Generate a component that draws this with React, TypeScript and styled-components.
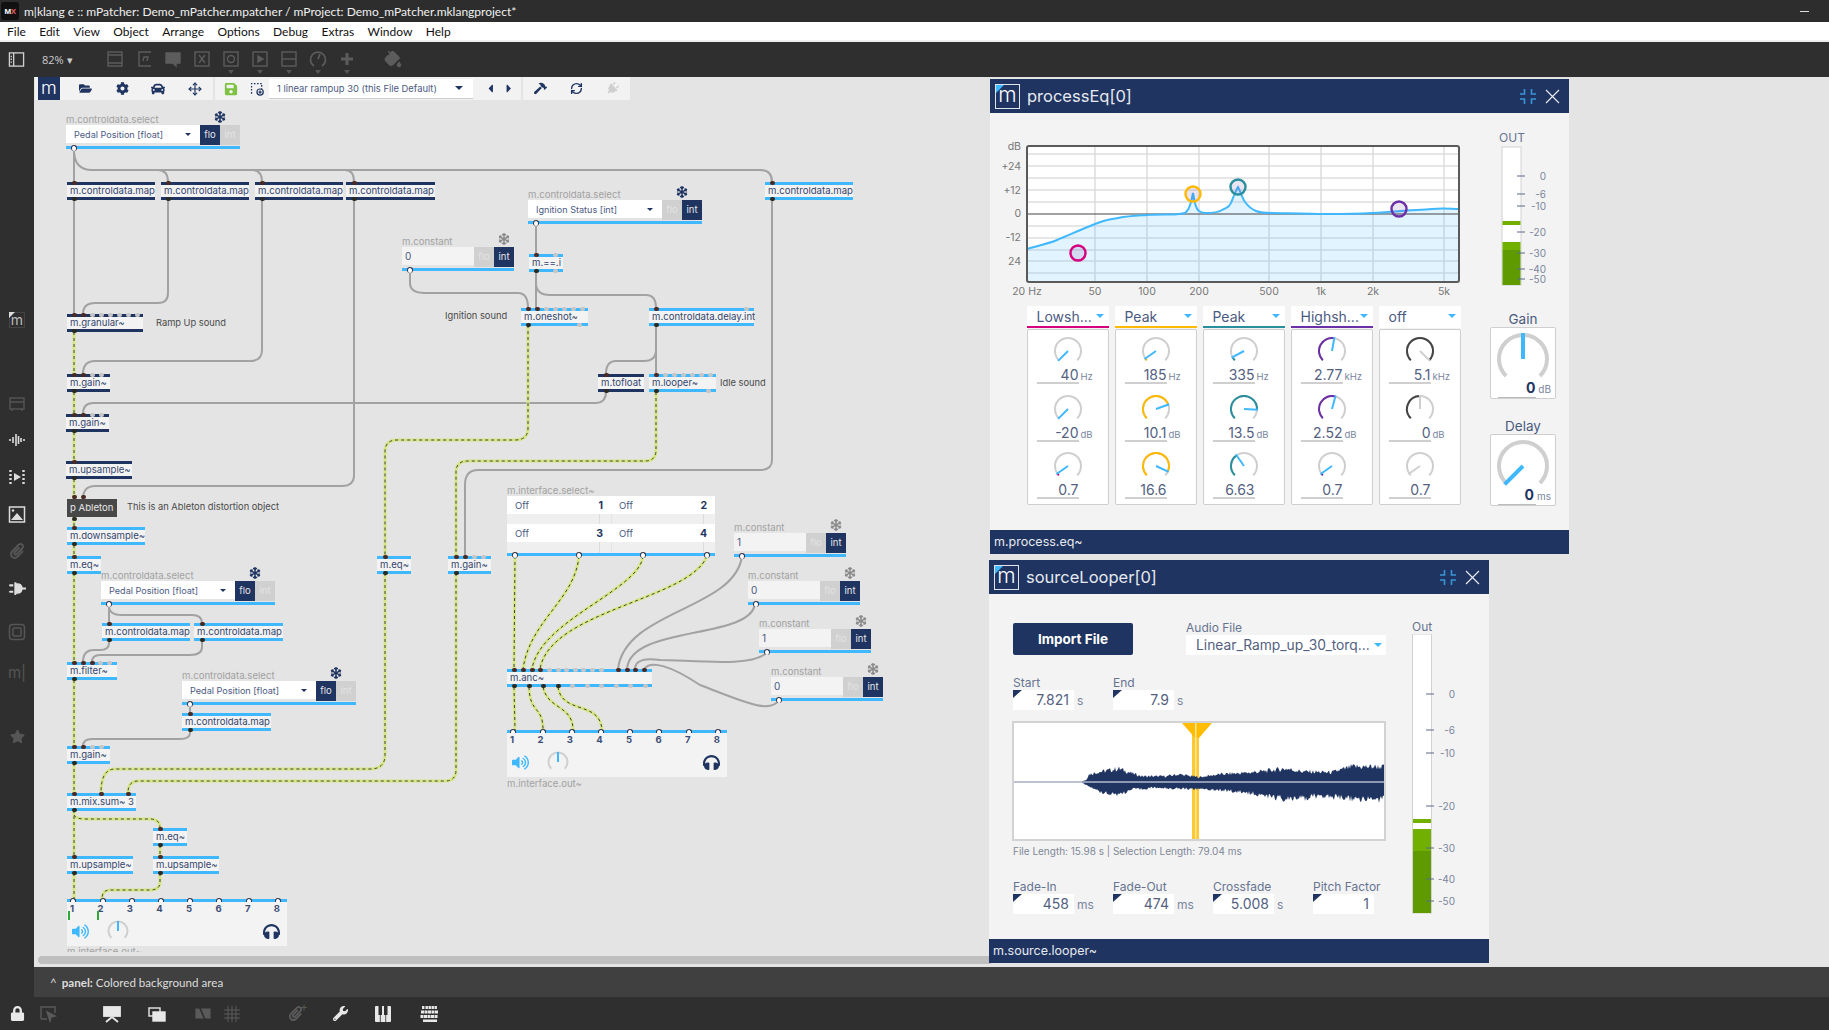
import React from 'react';
import styled, { createGlobalStyle } from 'styled-components';
import {
  FaCaretLeft, FaCaretRight, FaCar, FaCog, FaFolderOpen, FaHammer, FaHeadphones,
  FaLock, FaPaperclip, FaPlug, FaSave, FaSnowflake, FaStar, FaVolumeUp, FaWrench,
} from 'react-icons/fa';
import { Move, PaintBucket, RefreshCw } from 'lucide-react';

const NAVY = '#1f3461';
const BLUE = '#3fb8ff';
const OX = 34;
const OY = 77;

const GlobalStyle = createGlobalStyle`
  html, body { margin: 0; padding: 0; background: #333; overflow: hidden; }
  * { box-sizing: border-box; }
`;

const Shell = styled.div`
  width: 1829px;
  height: 1030px;
  display: flex;
  flex-direction: column;
  overflow: hidden;
  font-family: Inter, "Liberation Sans", sans-serif;
  color: #33466e;
`;

/* window chrome */

const TitleBar = styled.div`
  height: 22px;
  background: #2d2d2d;
  color: #f0f0f0;
  display: flex;
  align-items: center;
  font: 12px Lato, "Open Sans", sans-serif;
`;

const AppIcon = styled.div`
  width: 18px;
  height: 18px;
  margin: 0 5px 0 1px;
  background: #111;
  border-radius: 3px;
  font: bold 8px "Liberation Sans", sans-serif;
  color: #fff;
  display: flex;
  align-items: center;
  justify-content: center;
  letter-spacing: -0.5px;
  b { color: #e8606a; }
`;

const Minimize = styled.span`
  margin-left: auto;
  margin-right: 20px;
  width: 9px;
  height: 1px;
  background: #ddd;
`;

const MenuBar = styled.div`
  height: 20px;
  background: #fff;
  border-bottom: 2px solid #eee;
  display: flex;
  align-items: center;
  padding-left: 7px;
  gap: 13.4px;
  font: 12px Lato, "Open Sans", sans-serif;
  color: #111;
`;

const Toolbar = styled.div`
  height: 35px;
  background: #2f2f2f;
  display: flex;
  align-items: center;
  padding: 0 0 1px 8px;
  color: #5c5c5c;
`;

const ZoomLabel = styled.span`
  margin: 0 32px 0 17px;
  color: #ccc;
  font: 11px "Open Sans", sans-serif;
  white-space: nowrap;
`;

const ToolSlot = styled.span<{ $caret?: boolean; $gap?: number }>`
  position: relative;
  width: 20px;
  height: 20px;
  margin-left: ${p => p.$gap ?? 9}px;
  display: flex;
  align-items: center;
  justify-content: center;
  &::after {
    content: '';
    display: ${p => (p.$caret ? 'block' : 'none')};
    position: absolute;
    bottom: -5px;
    left: 7px;
    border: 3px solid transparent;
    border-top: 4px solid #555;
    border-bottom: 0;
  }
`;

const Main = styled.div`
  flex: 1;
  display: flex;
  min-height: 0;
`;

const SideBar = styled.div`
  width: 34px;
  background: #2f2f2f;
  display: flex;
  flex-direction: column;
  align-items: center;
  padding-top: 225px;
`;

const SideIcon = styled.span<{ $dim?: boolean; $mt?: number }>`
  height: 36px;
  width: 34px;
  margin-top: ${p => p.$mt ?? 1}px;
  display: flex;
  align-items: center;
  justify-content: center;
  color: ${p => (p.$dim ? '#555' : '#ddd')};
  font: 15px Inter, sans-serif;
`;

const SideLogo = styled.span`
  position: relative;
  width: 16px;
  height: 16px;
  border: 1px solid #444;
  color: #bbb;
  font-size: 14px;
  line-height: 13px;
  text-align: center;
  &::before {
    content: '';
    position: absolute;
    left: -1px;
    top: -1px;
    border-top: 6px solid #ddd;
    border-right: 6px solid transparent;
  }
`;

const Rotated = styled.span<{ $deg: number }>`
  display: flex;
  transform: rotate(${p => p.$deg}deg);
`;

const MainColumn = styled.div`
  flex: 1;
  display: flex;
  flex-direction: column;
  min-width: 0;
`;

const Workspace = styled.div`
  position: relative;
  height: 890px;
  background: #e4e4e4;
  overflow: hidden;
`;

const StatusBar = styled.div`
  height: 30px;
  background: #404040;
  color: #ddd;
  display: flex;
  align-items: center;
  padding-left: 16px;
  gap: 5px;
  font: 11.6px Lato, "Open Sans", sans-serif;
  b { font-weight: 700; }
`;

const BottomBar = styled.div`
  height: 33px;
  background: #2f2f2f;
  display: flex;
  align-items: center;
`;

const BottomIcon = styled.span<{ $dim?: boolean; $mx: number; $plus?: boolean }>`
  position: relative;
  width: 20px;
  height: 20px;
  margin-left: ${p => p.$mx}px;
  display: flex;
  align-items: center;
  justify-content: center;
  color: ${p => (p.$dim ? '#5a5a5a' : '#e8e8e8')};
  &::after {
    content: ${p => (p.$plus ? "'+'" : 'none')};
    position: absolute;
    right: -3px;
    top: -3px;
    font-size: 12px;
    line-height: 12px;
  }
`;

const ScrollThumb = styled.div`
  position: absolute;
  left: 4px;
  top: 879px;
  width: 955px;
  height: 8px;
  border-radius: 4px;
  background: #bfbfbf;
`;

/* patcher toolbar */

const PatchBar = styled.div`
  position: absolute;
  left: 1px;
  top: 0;
  height: 23px;
  display: flex;
  gap: 2px;
`;

const PatchGroup = styled.div<{ $w: number }>`
  width: ${p => p.$w}px;
  background: #f2f2f2;
  display: flex;
  align-items: center;
  color: ${NAVY};
`;

const PatchLogo = styled.div`
  width: 22px;
  height: 23px;
  margin-left: 3px;
  margin-right: 8px;
  background: ${NAVY};
  color: #fff;
  font-size: 18px;
  font-weight: 300;
  line-height: 21px;
  text-align: center;
`;

const PatchButton = styled.span<{ $w: number; $color?: string; $ml?: number }>`
  width: ${p => p.$w}px;
  margin-left: ${p => p.$ml ?? 0}px;
  display: flex;
  justify-content: center;
  color: ${p => p.$color ?? NAVY};
`;

const PresetSelect = styled.div`
  width: 204px;
  height: 20px;
  margin-left: 2px;
  background: #fff;
  border-bottom: 1px solid #ccc;
  font-size: 9.4px;
  color: #4a5a7f;
  display: flex;
  align-items: center;
  justify-content: space-between;
  padding: 0 10px 0 8px;
  white-space: nowrap;
`;

const Caret = styled.span<{ $color?: string; $size?: number }>`
  flex: none;
  border-style: solid;
  border-color: transparent;
  border-width: ${p => p.$size ?? 4}px ${p => p.$size ?? 4}px 0;
  border-top-color: ${p => p.$color ?? NAVY};
`;

/* patch nodes */

const NodeBox = styled.div<{ $x: number; $y: number; $w: number; $h?: number; $dark?: boolean }>`
  position: absolute;
  left: ${p => p.$x - OX}px;
  top: ${p => p.$y - OY}px;
  width: ${p => p.$w}px;
  height: ${p => p.$h ?? 18}px;
  background: #f3f3f3;
  border-top: 3px solid ${p => (p.$dark ? NAVY : BLUE)};
  border-bottom: 3px solid ${p => (p.$dark ? NAVY : BLUE)};
  padding-left: 3px;
  font-size: 9.6px;
  line-height: 12px;
  color: #33466e;
  white-space: nowrap;
`;

const SubPatch = styled.div<{ $x: number; $y: number; $w: number }>`
  position: absolute;
  left: ${p => p.$x - OX}px;
  top: ${p => p.$y - OY}px;
  width: ${p => p.$w}px;
  height: 18px;
  background: #484848;
  color: #e8e8e8;
  padding-left: 3px;
  font-size: 9.6px;
  line-height: 18px;
  white-space: nowrap;
`;

const Port = styled.span<{ $left: number; $side: 'in' | 'out'; $dim?: boolean }>`
  position: absolute;
  left: ${p => p.$left - 2}px;
  ${p => (p.$side === 'in' ? 'top: -4px;' : 'bottom: -4px;')}
  width: 5px;
  height: 4px;
  border-radius: 2px;
  background: ${p => (p.$dim ? '#c6c6c6' : p.$side === 'in' ? '#4a2a22' : '#2a2a1e')};
`;

const PatchNote = styled.div<{ $x: number; $y: number }>`
  position: absolute;
  left: ${p => p.$x - OX}px;
  top: ${p => p.$y - OY - 7}px;
  font-size: 9.3px;
  line-height: 14px;
  color: #4a4a4a;
  white-space: nowrap;
`;

const CableLayer = styled.svg`
  position: absolute;
  left: 0;
  top: 0;
`;

const Widget = styled.div<{ $x: number; $y: number; $w: number }>`
  position: absolute;
  left: ${p => p.$x - OX}px;
  top: ${p => p.$y - OY}px;
  width: ${p => p.$w}px;
`;

const WidgetHead = styled.div<{ $pad: number; $frost?: boolean }>`
  height: 12px;
  display: flex;
  justify-content: space-between;
  align-items: center;
  padding-right: ${p => p.$pad}px;
  font-size: 9.6px;
  color: #a2a2a2;
  white-space: nowrap;
  svg { color: ${p => (p.$frost ? '#8a8a8a' : NAVY)}; margin-top: -4px; }
`;

const WidgetRow = styled.div`
  display: flex;
  height: 20px;
`;

const WidgetField = styled.div<{ $input?: boolean }>`
  flex: 1;
  height: 18px;
  background: ${p => (p.$input ? '#f3f3f3' : '#fff')};
  display: flex;
  align-items: center;
  justify-content: space-between;
  padding: 0 9px 0 ${p => (p.$input ? 3 : 8)}px;
  font-size: ${p => (p.$input ? 10 : 9.1)}px;
  color: #4a5a7f;
  white-space: nowrap;
`;

const TypeFlag = styled.div<{ $on?: boolean }>`
  width: 20px;
  background: ${p => (p.$on ? NAVY : '#d0d0d0')};
  color: ${p => (p.$on ? '#e6e6e6' : '#e4e4e4')};
  font-size: 9.5px;
  text-align: center;
  line-height: 20px;
`;

const WidgetBar = styled.div<{ $flush?: boolean }>`
  position: relative;
  margin-top: ${p => (p.$flush ? 0 : 1)}px;
  height: 3px;
  background: ${BLUE};
`;

const OpenPort = styled.span<{ $left: number }>`
  position: absolute;
  left: ${p => p.$left - 3}px;
  top: -1px;
  width: 6px;
  height: 6px;
  border-radius: 50%;
  background: #fff;
  border: 1px solid #334;
  border-bottom: 0;
`;

const InterfaceSelect = styled.div`
  position: absolute;
  left: ${507 - OX}px;
  top: ${484 - OY}px;
  width: 208px;
`;

const SmallLabel = styled.div<{ $clip?: boolean }>`
  height: ${p => (p.$clip ? 6 : 12)}px;
  overflow: hidden;
  padding-top: ${p => (p.$clip ? 0 : 1)}px;
  font-size: 9.6px;
  line-height: 11px;
  color: #a2a2a2;
  white-space: nowrap;
`;

const OutRow = styled.div`
  display: grid;
  grid-template-columns: 104px 104px;
  height: 18px;
  background: #fff;
`;

const OutCell = styled.div`
  display: flex;
  justify-content: space-between;
  align-items: center;
  padding: 0 8px;
  font-size: 9.5px;
  color: #4a5a7f;
  b { color: ${NAVY}; font-size: 10.5px; }
`;

const OutStrip = styled.div<{ $h: number }>`
  height: ${p => p.$h}px;
  background: linear-gradient(90deg, #efefef 0 92px, #dcdcdc 92px 93px, #efefef 93px 104px, #e4e4e4 104px 105px, #efefef 105px 196px, #dcdcdc 196px 197px, #efefef 197px);
`;

const OutPanel = styled.div<{ $x: number; $y: number }>`
  position: absolute;
  left: ${p => p.$x - OX}px;
  top: ${p => p.$y - OY}px;
  width: 220px;
`;

const OutBody = styled.div`
  position: relative;
  height: 44px;
  background: #f3f3f3;
  padding-top: 1px;
`;

const OutNumbers = styled.div`
  display: flex;
  justify-content: space-between;
  padding: 0 7px 0 3px;
  font-size: 9.5px;
  line-height: 11px;
  font-weight: 700;
  color: #3c4e78;
`;

const OutControls = styled.div`
  display: flex;
  align-items: center;
  height: 24px;
  margin-top: 5px;
  padding: 0 7px 0 5px;
  color: ${BLUE};
  svg + svg { margin-left: 18px; }
`;

const Phones = styled.span`
  margin-left: auto;
  color: ${NAVY};
  display: flex;
`;

const LevelTick = styled.span<{ $left: number }>`
  position: absolute;
  left: ${p => p.$left}px;
  top: 9px;
  width: 2px;
  height: 9px;
  background: #2ea83a;
`;

/* floating windows */

const Window = styled.div<{ $x: number; $y: number; $w: number }>`
  position: absolute;
  left: ${p => p.$x - OX}px;
  top: ${p => p.$y - OY}px;
  width: ${p => p.$w}px;
  background: #f3f3f3;
  display: flex;
  flex-direction: column;
`;

const WindowHead = styled.div`
  height: 34px;
  background: ${NAVY};
  display: flex;
  align-items: center;
  padding: 0 9px 0 5px;
  color: #e6e9ef;
  font-size: 16.5px;
`;

const WindowLogo = styled.div`
  position: relative;
  width: 25px;
  height: 25px;
  margin-right: 7px;
  border: 1.5px solid #dfe4ec;
  color: #fff;
  font-size: 21px;
  font-weight: 300;
  line-height: 19px;
  text-align: center;
  &::before {
    content: '';
    position: absolute;
    left: 0;
    top: 0;
    border-top: 8px solid ${BLUE};
    border-right: 8px solid transparent;
  }
`;

const HeadTools = styled.div`
  margin-left: auto;
  display: flex;
  align-items: center;
  gap: 9px;
`;

const WindowFoot = styled.div`
  height: 24px;
  background: ${NAVY};
  color: #e6e9ef;
  padding-left: 4px;
  font-size: 12.5px;
  line-height: 24px;
`;

const EqBody = styled.div`
  height: 417px;
  display: flex;
  gap: 28px;
  padding: 18px 0 0 10px;
`;

const EqLeft = styled.div`
  width: 462px;
`;

const BandRow = styled.div`
  display: flex;
  gap: 6px;
  margin: 4px 0 0 26.5px;
`;

const Band = styled.div`
  width: 82px;
`;

const BandSelect = styled.div<{ $color: string }>`
  height: 22px;
  background: #fff;
  border-bottom: 2px solid ${p => p.$color};
  display: flex;
  align-items: center;
  justify-content: space-between;
  padding: 0 5px 0 10px;
  font-size: 14px;
  color: #4a5a7f;
`;

const BandBox = styled.div`
  margin-top: 1px;
  height: 176px;
  background: #fff;
  border: 1px solid #cfcfcf;
  border-radius: 2px;
  padding-top: 7px;
  display: flex;
  flex-direction: column;
  gap: 10.5px;
`;

const KnobCell = styled.div`
  display: flex;
  flex-direction: column;
  align-items: center;
`;

const ValueRow = styled.div`
  align-self: flex-start;
  display: flex;
  align-items: flex-end;
  height: 19px;
  margin-left: 9px;
`;

const ValueField = styled.span`
  width: 42px;
  height: 19px;
  border-bottom: 2px solid #cfcfcf;
  font-size: 14px;
  line-height: 20px;
  text-align: right;
  color: #53617f;
`;

const ValueUnit = styled.span`
  margin: 0 0 2px 2px;
  font-size: 9.5px;
  line-height: 11px;
  color: #7a869e;
`;

const EqRight = styled.div`
  width: 66px;
  display: flex;
  flex-direction: column;
`;

const KnobHeading = styled.div<{ $mt: number }>`
  margin-top: ${p => p.$mt}px;
  height: 16px;
  font-size: 13.5px;
  line-height: 16px;
  text-align: center;
  color: #4a5a7f;
`;

const BigKnobBox = styled.div`
  position: relative;
  height: 72px;
  background: #fff;
  border: 1px solid #cfcfcf;
  border-radius: 2px;
  padding-top: 1px;
  display: flex;
  flex-direction: column;
  align-items: center;
  &::after {
    content: '';
    position: absolute;
    left: 7px;
    bottom: 0;
    width: 38px;
    height: 1px;
    background: #bbb;
  }
`;

const BigValue = styled.div`
  align-self: flex-end;
  height: 14px;
  padding-right: 4px;
  display: flex;
  align-items: baseline;
  gap: 3px;
  font-size: 14px;
  line-height: 14px;
  font-weight: 700;
  color: ${NAVY};
  span { font-size: 10px; font-weight: 400; color: #7a869e; }
`;

const MeterFrame = styled.svg`
  display: block;
  font-family: Inter, sans-serif;
`;

const LooperBody = styled.div`
  height: 345px;
  display: flex;
  gap: 26px;
  padding: 27px 0 0 24px;
`;

const LooperLeft = styled.div`
  width: 373px;
`;

const LooperTop = styled.div`
  display: flex;
  align-items: flex-end;
  gap: 53px;
`;

const ImportButton = styled.button`
  width: 120px;
  height: 32px;
  border: 0;
  border-radius: 2px;
  background: ${NAVY};
  color: #fff;
  font: 700 13.5px Inter, sans-serif;
`;

const FieldLabel = styled.div`
  height: 14px;
  font-size: 12px;
  line-height: 14px;
  color: #667391;
  white-space: nowrap;
`;

const FileSelect = styled.div`
  width: 200px;
  height: 20px;
  background: #fff;
  display: flex;
  align-items: center;
  justify-content: space-between;
  padding: 0 4px 0 10px;
  font-size: 13.8px;
  color: #53617f;
  white-space: nowrap;
`;

const FieldRow = styled.div<{ $mt: number }>`
  display: flex;
  margin-top: ${p => p.$mt}px;
`;

const FieldGroup = styled.div`
  flex: none;
  width: 100px;
`;

const FieldLine = styled.div`
  display: flex;
  align-items: center;
`;

const NumberField = styled.div`
  position: relative;
  width: 61px;
  height: 20px;
  background: #fff;
  padding-right: 5px;
  text-align: right;
  font-size: 14px;
  line-height: 20px;
  color: #53617f;
  &::before {
    content: '';
    position: absolute;
    left: 0;
    top: 0;
    border-top: 8px solid ${NAVY};
    border-right: 9px solid transparent;
  }
`;

const FieldUnit = styled.span`
  margin-left: 3px;
  font-size: 12px;
  color: #7a869e;
`;

const WaveFrame = styled.svg`
  display: block;
  margin: 11px 0 0 -1px;
  border: 2px solid #d2d2d2;
  background: #fff;
`;

const WaveInfo = styled.div`
  margin-top: 3px;
  height: 14px;
  font-size: 10px;
  line-height: 14px;
  color: #7f8898;
  white-space: nowrap;
`;

const LooperRight = styled.div`
  width: 60px;
`;

const OutTitle = styled.div`
  height: 13px;
  font-size: 12px;
  line-height: 12px;
  color: #667391;
`;

/* drawings */

const polar = (cx: number, cy: number, r: number, deg: number) => {
  const rad = (deg * Math.PI) / 180;
  return [cx + r * Math.sin(rad), cy - r * Math.cos(rad)];
};

const arc = (cx: number, cy: number, r: number, a: number, b: number) => {
  const [x1, y1] = polar(cx, cy, r, a);
  const [x2, y2] = polar(cx, cy, r, b);
  return `M${x1} ${y1}A${r} ${r} 0 ${b - a > 180 ? 1 : 0} 1 ${x2} ${y2}`;
};

type KnobProps = { angle: number; color?: string; hand?: string; big?: boolean };

const Knob = ({ angle, color, hand = BLUE, big }: KnobProps) => {
  const w = big ? 60 : 30;
  const h = big ? 52 : 28;
  const cx = w / 2;
  const cy = big ? 30 : 14;
  const r = big ? 24 : 13;
  const sw = big ? 4 : 2;
  const [tx, ty] = polar(cx, cy, big ? 26 : 14, angle);
  return (
    <svg width={w} height={h}>
      <path d={arc(cx, cy, r, -135, 135)} fill="none" stroke="#cfcfcf" strokeWidth={sw} />
      {color && <path d={arc(cx, cy, r, -135, angle)} fill="none" stroke={color} strokeWidth={sw} />}
      <line x1={cx} y1={cy} x2={tx} y2={ty} stroke={hand} strokeWidth={big ? 4 : 2} />
    </svg>
  );
};

const VolumeDial = () => (
  <svg width="22" height="22" viewBox="0 0 22 22">
    <path d={arc(11, 11, 9.5, -135, 135)} fill="none" stroke="#cfcfcf" strokeWidth="2" />
    <line x1="11" y1="11" x2="11" y2="1" stroke={BLUE} strokeWidth="2" />
  </svg>
);

type MeterProps = {
  w: number; h: number; x: number; top: number; bottom: number; peak: number; bar: number; mid: number;
  title?: string; labelX: number; ticks: [string, number][]; tickX: number;
};

const Meter = ({ w, h, x, top, bottom, peak, bar, mid, title, labelX, ticks, tickX }: MeterProps) => (
  <MeterFrame width={w} height={h}>
    {title && <text x={x + 10} y={11} textAnchor="middle" fontSize="12" fill="#667391">{title}</text>}
    <rect x={x} y={top} width="19" height={bottom - top} fill="#fff" stroke="#d2d2d2" />
    <rect x={x + 0.5} y={peak} width="18" height="4" fill="#72b000" />
    <rect x={x + 0.5} y={bar} width="18" height={mid - bar} fill="#72b000" />
    <rect x={x + 0.5} y={mid} width="18" height={bottom - mid} fill="#5f9a00" />
    {ticks.map(([t, y]) => (
      <g key={t}>
        <rect x={tickX} y={y - 0.5} width="8" height="1" fill="#5a6a8a" />
        <text x={labelX} y={y + 3.5} textAnchor="end" fontSize="10" fill="#7a869e">{t}</text>
      </g>
    ))}
  </MeterFrame>
);

const eqCurve =
  'M0 103C10 100 20 98 30 94S55 83 68 78S80 74 91 72S105 70 120 69S145 69 152 68S158 67 160 65S164 58 166 47C168 58 169 63 172 65S176 67 179 67S190 67 195 64S202 62 204 57S209 44 211 41C213 44 215 52 218 56S224 63 229 65S238 67 245 67S280 68 298 68S330 68 344 67S365 66 374 65S395 64 405 63S425 63 432 63';

const EqPlot = () => {
  const hLines = [8, 20, 32, 44, 56, 80, 92, 104, 115, 127];
  const vLines = [68, 120, 172, 242, 294, 346, 417];
  const dbs: [string, number][] = [['dB', 4], ['+24', 24], ['+12', 48], ['0', 71], ['-12', 95], ['24', 119]];
  const freqs: [string, number][] = [['20 Hz', 0], ['50', 68], ['100', 120], ['200', 172], ['500', 242], ['1k', 294], ['2k', 346], ['5k', 417]];
  const handles: [number, number, string][] = [[51, 107, '#d6007f'], [166, 48, '#ffb900'], [211, 41, '#2a8f9c'], [372, 63, '#6b2fa6']];
  return (
    <MeterFrame width="462" height="171">
      <g transform="translate(27 15)">
        <rect width="432" height="136" fill="#fff" />
        {hLines.map(y => <line key={y} x1="0" x2="432" y1={y} y2={y} stroke="#dedede" strokeWidth="1.5" />)}
        {vLines.map(x => <line key={x} y1="0" y2="136" x1={x} x2={x} stroke="#dcdcdc" strokeWidth="1.5" />)}
        <path d={`${eqCurve}V136H0Z`} fill="rgba(95,195,255,.18)" />
        <line x1="0" x2="432" y1="68" y2="68" stroke="#444" />
        <path d={eqCurve} fill="none" stroke={BLUE} strokeWidth="2" />
        {handles.map(([x, y, c]) => (
          <ellipse key={c} cx={x} cy={y} rx="7.5" ry="7.5" fill="rgba(110,70,160,.14)" stroke={c} strokeWidth="2.4" />
        ))}
        <rect x="0" y="0" width="432" height="136" rx="2" fill="none" stroke="#5a5a5a" strokeWidth="2" />
        {dbs.map(([t, y]) => <text key={t} x="-6" y={y} textAnchor="end" fontSize="10.5" fill="#777">{t}</text>)}
        {freqs.map(([t, x]) => <text key={t} x={x} y="149" textAnchor="middle" fontSize="10.5" fill="#777">{t}</text>)}
      </g>
    </MeterFrame>
  );
};

const lerp = (pts: number[][], x: number) => {
  for (let i = 1; i < pts.length; i++) {
    if (x <= pts[i][0]) {
      const [a, av] = pts[i - 1];
      const [b, bv] = pts[i];
      return av + ((bv - av) * (x - a)) / (b - a);
    }
  }
  return pts[pts.length - 1][1];
};

const topEnv = [[68, 1], [72, 2], [75, 8], [82, 10], [105, 14], [118, 9], [128, 6], [152, 6], [165, 8], [185, 5], [205, 8], [238, 10], [272, 14], [288, 11], [318, 10], [338, 16], [372, 16]];
const botEnv = [[68, 1], [72, 3], [85, 10], [105, 13], [118, 8], [138, 6], [172, 7], [205, 8], [238, 12], [278, 19], [305, 14], [338, 18], [372, 18]];

const jitter = (i: number) => {
  const s = Math.sin(i * 12.9898) * 43758.5453;
  return s - Math.floor(s);
};

const wavePath = () => {
  const up: string[] = [];
  const down: string[] = [];
  for (let x = 68; x <= 372; x += 1) {
    up.push(`${x} ${59 - lerp(topEnv, x) * (0.75 + 0.4 * jitter(x))}`);
    down.unshift(`${x} ${59 + lerp(botEnv, x) * (0.75 + 0.4 * jitter(x + 500))}`);
  }
  return `M${up.join('L')}L${down.join('L')}Z`;
};

const Waveform = () => (
  <WaveFrame width="374" height="120" viewBox="0 0 370 116" preserveAspectRatio="none">
    <rect x="178" y="0" width="7" height="116" fill="#ffc933" />
    <rect x="181" y="0" width="1.5" height="116" fill="#ffe595" />
    <path d="M168 0H198L185 15H181Z" fill="#ffbc00" />
    <rect x="181" y="0" width="1.5" height="15" fill="#ffe595" />
    <path d={wavePath()} fill={NAVY} />
    <rect x="0" y="58.2" width="370" height="1.6" fill="#a8b2c8" />
  </WaveFrame>
);

const Shrink = () => (
  <svg width="16" height="15" viewBox="0 0 16 15" fill="none" stroke="#3a94d8" strokeWidth="1.6">
    <path d="M0 5H4.5V0M11.5 0V5H16M16 10H11.5V15M4.5 15V10H0" />
  </svg>
);

const CloseX = () => (
  <svg width="15" height="15" viewBox="0 0 15 15" stroke="#eef" strokeWidth="1.1">
    <path d="M1 1L14 14M14 1L1 14" />
  </svg>
);

const Box = ({ children, size = 18, w = 1.4 }: { children?: React.ReactNode; size?: number; w?: number }) => (
  <svg width={size} height={size} viewBox="0 0 18 18" fill="none" stroke="currentColor" strokeWidth={w}>
    {children}
  </svg>
);

const PianoKeys = () => (
  <svg width="18" height="18" viewBox="0 0 18 18">
    <rect x="1" y="1" width="16" height="16" rx="1" fill="currentColor" />
    <path d="M6.3 1V17M11.7 1V17" stroke="#2f2f2f" strokeWidth="0.8" />
    <path d="M4.5 1H8V10H4.5ZM10 1H13.5V10H10Z" fill="#2f2f2f" />
  </svg>
);

const KeyboardGrid = () => (
  <svg width="20" height="18" viewBox="0 0 20 18" fill="currentColor">
    {[2, 5.5, 8.5, 11.5, 14.5].map(x => <rect key={`a${x}`} x={x} y="1" width="2.4" height="3" />)}
    {[1, 4.5, 8, 11.5, 15].map(x => <rect key={`b${x}`} x={x} y="5.5" width="3" height="3" />)}
    {[0.5, 4, 7.5, 11, 14.5].map(x => <rect key={`c${x}`} x={x} y="10" width="3" height="3" />)}
    <rect x="3" y="14.5" width="14" height="2.5" />
  </svg>
);

/* data */

type NodeData = {
  t: string; x: number; y: number; w: number; h?: number; dark?: boolean;
  ins?: number[]; outs?: number[]; dimIns?: number[]; dimOuts?: number[];
};

const range = (from: number, step: number, n: number) => Array.from({ length: n }, (_, i) => from + i * step);

const nodes: NodeData[] = [
  { t: 'm.controldata.map', x: 67, y: 182, w: 88, dark: true, ins: [74], outs: [74] },
  { t: 'm.controldata.map', x: 161, y: 182, w: 88, dark: true, ins: [168], outs: [168] },
  { t: 'm.controldata.map', x: 255, y: 182, w: 88, dark: true, ins: [262], outs: [262] },
  { t: 'm.controldata.map', x: 346, y: 182, w: 89, dark: true, ins: [354], outs: [354] },
  { t: 'm.granular~', x: 67, y: 314, w: 76, dark: true, ins: [74, 83], dimIns: range(92, 9, 6), outs: [74] },
  { t: 'm.gain~', x: 67, y: 374, w: 43, dark: true, ins: [74, 83], dimIns: [92, 101], outs: [74] },
  { t: 'm.gain~', x: 66, y: 414, w: 43, dark: true, ins: [74, 83], dimIns: [92, 101], outs: [74] },
  { t: 'm.upsample~', x: 66, y: 461, w: 66, dark: true, ins: [74], outs: [74] },
  { t: 'm.downsample~', x: 67, y: 527, w: 78, ins: [74], outs: [74] },
  { t: 'm.eq~', x: 67, y: 556, w: 34, ins: [74], outs: [74] },
  { t: 'm.controldata.map', x: 102, y: 623, w: 88, ins: [109], outs: [109] },
  { t: 'm.controldata.map', x: 194, y: 623, w: 89, ins: [202], outs: [202] },
  { t: 'm.filter~', x: 67, y: 662, w: 50, ins: [74, 83, 92], dimIns: [100, 109], outs: [74] },
  { t: 'm.controldata.map', x: 182, y: 713, w: 89, ins: [190], outs: [190] },
  { t: 'm.gain~', x: 67, y: 746, w: 43, ins: [74, 83], dimIns: [92, 101], outs: [74] },
  { t: 'm.mix.sum~ 3', x: 67, y: 793, w: 69, ins: [74, 101, 128], outs: [74] },
  { t: 'm.eq~', x: 153, y: 828, w: 34, ins: [160], outs: [160] },
  { t: 'm.upsample~', x: 67, y: 856, w: 66, ins: [74], outs: [74] },
  { t: 'm.upsample~', x: 153, y: 856, w: 66, ins: [160], outs: [160] },
  { t: 'm.eq~', x: 377, y: 556, w: 34, ins: [385], outs: [385] },
  { t: 'm.gain~', x: 448, y: 556, w: 43, ins: [456, 465], dimIns: [474, 483], outs: [456] },
  { t: 'm.controldata.map', x: 765, y: 182, w: 88, ins: [772], outs: [772] },
  { t: 'm.==.i', x: 529, y: 254, w: 34, ins: [536], dimIns: [555], outs: [536], dimOuts: [555] },
  { t: 'm.oneshot~', x: 521, y: 308, w: 67, ins: [528, 537], dimIns: range(546, 9, 5), outs: [528], dimOuts: [579] },
  { t: 'm.controldata.delay.int', x: 649, y: 308, w: 105, ins: [656], dimIns: [746], outs: [656] },
  { t: 'm.tofloat', x: 598, y: 374, w: 46, dark: true, ins: [606], outs: [606] },
  { t: 'm.looper~', x: 649, y: 374, w: 67, ins: [656], dimIns: range(665, 9, 6), outs: [656], dimOuts: [708] },
  { t: 'm.anc~', x: 507, y: 669, w: 145, ins: [514, 523, 532, 540, 618, 627, 635, 644], dimIns: range(549, 8.6, 7), outs: [514, 529, 543, 558], dimOuts: range(572, 14.5, 6) },
];

const selects = [
  { x: 66, y: 113, option: 'Pedal Position [float]', flo: true, port: 8 },
  { x: 101, y: 569, option: 'Pedal Position [float]', flo: true, port: 8 },
  { x: 182, y: 669, option: 'Pedal Position [float]', flo: true, port: 8 },
  { x: 528, y: 188, option: 'Ignition Status [int]', flo: false, port: 8 },
];

const constants = [
  { x: 402, y: 235, value: '0' },
  { x: 734, y: 521, value: '1' },
  { x: 748, y: 569, value: '0' },
  { x: 759, y: 617, value: '1' },
  { x: 771, y: 665, value: '0' },
];

const controlCables = [
  'M74 148V182',
  'M74 150Q74 170 92 170H760Q772 170 772 182',
  'M158 170Q168 170 168 182',
  'M252 170Q262 170 262 182',
  'M345 170Q354 170 354 182',
  'M74 200V314',
  'M168 200V293Q168 303 158 303H95Q83 303 83 314',
  'M262 200V350Q262 361 250 361H95Q83 361 83 374',
  'M354 200V475Q354 486 342 486H95Q83 486 83 499',
  'M606 392Q606 403 595 403H93Q83 403 83 414',
  'M410 270V283Q410 293 425 293H518Q528 293 528 308',
  'M536 223V254',
  'M536 271V308',
  'M536 283Q536 295 550 295H646Q656 295 656 308',
  'M656 325V374',
  'M656 350Q656 361 644 361H616Q606 361 606 374',
  'M772 200V460Q772 470 760 470H478Q465 470 465 485V556',
  'M109 604V623',
  'M109 606Q109 615 122 615H192Q202 615 202 623',
  'M109 640V643Q109 650 100 650H94Q83 650 83 662',
  'M202 640V647Q202 655 190 655H100Q92 655 92 662',
  'M190 704V713',
  'M190 730V733Q190 739 180 739H92Q83 739 83 746',
  'M742 556C735 610 625 610 618 669',
  'M755 604C750 640 630 625 627 669',
  'M767 652C755 668 690 660 660 660C645 658 635 660 635 669',
  'M779 700C770 715 740 700 700 685C670 665 650 660 644 669',
];

const audioCables = [
  'M74 332V374', 'M74 392V414', 'M74 432V461', 'M74 479V499', 'M74 517V527', 'M74 545V556',
  'M74 573V662', 'M74 680V746', 'M74 763V793', 'M74 810V856', 'M74 873V899',
  'M74 815Q76 819 85 819H150Q160 819 160 828',
  'M160 845V856',
  'M160 873V882Q160 890 150 890H110Q102 890 102 899',
  'M528 325V428Q528 440 515 440H397Q385 440 385 452V556',
  'M385 573V755Q385 769 370 769H115Q101 769 101 793',
  'M456 573V770Q456 781 445 781H138Q128 781 128 793',
  'M656 392V450Q656 461 645 461H468Q456 461 456 472V556',
  'M515 556L514 669',
  'M579 556C575 600 530 620 523 669',
  'M643 556C640 590 540 620 532 669',
  'M707 556C690 600 550 610 540 669',
  'M514 687L515 730',
  'M529 687C530 715 543 705 543 730',
  'M543 687C548 710 573 705 573 730',
  'M558 687C562 715 600 700 602 730',
];

type BandKnob = { angle: number; color?: string; hand?: string; value: string; unit?: string };
type BandData = { name: string; color: string; knobs: BandKnob[] };

const bands: BandData[] = [
  {
    name: 'Lowsh...', color: '#d6007f',
    knobs: [
      { angle: -135, value: '40', unit: 'Hz' },
      { angle: -135, value: '-20', unit: 'dB' },
      { angle: -125, color: '#d6007f', value: '0.7' },
    ],
  },
  {
    name: 'Peak', color: '#ffb900',
    knobs: [
      { angle: -125, color: '#ffb900', value: '185', unit: 'Hz' },
      { angle: 70, color: '#ffb900', value: '10.1', unit: 'dB' },
      { angle: 115, color: '#ffb900', value: '16.6' },
    ],
  },
  {
    name: 'Peak', color: '#2a8f9c',
    knobs: [
      { angle: -118, color: '#2a8f9c', value: '335', unit: 'Hz' },
      { angle: 93, color: '#2a8f9c', value: '13.5', unit: 'dB' },
      { angle: -35, color: '#2a8f9c', value: '6.63' },
    ],
  },
  {
    name: 'Highsh...', color: '#6b2fa6',
    knobs: [
      { angle: 10, color: '#6b2fa6', value: '2.77', unit: 'kHz' },
      { angle: 15, color: '#6b2fa6', value: '2.52', unit: 'dB' },
      { angle: -125, color: '#6b2fa6', value: '0.7' },
    ],
  },
  {
    name: 'off', color: '#fff',
    knobs: [
      { angle: 135, color: '#444', hand: '#cfcfcf', value: '5.1', unit: 'kHz' },
      { angle: 0, color: '#444', hand: '#cfcfcf', value: '0', unit: 'dB' },
      { angle: -125, hand: '#cfcfcf', value: '0.7' },
    ],
  },
];

const menuItems = ['File', 'Edit', 'View', 'Object', 'Arrange', 'Options', 'Debug', 'Extras', 'Window', 'Help'];

const eqTicks: [string, number][] = [['0', 45], ['-6', 63], ['-10', 75], ['-20', 101], ['-30', 122], ['-40', 138], ['-50', 148]];
const looperTicks: [string, number][] = [['0', 60], ['-6', 96], ['-10', 119], ['-20', 172], ['-30', 214], ['-40', 245], ['-50', 267]];

const PatchNode = ({ t, x, y, w, h, dark, ins = [], outs = [], dimIns = [], dimOuts = [] }: NodeData) => (
  <NodeBox $x={x} $y={y} $w={w} $h={h} $dark={dark}>
    {t}
    {dimIns.map(p => <Port key={`d${p}`} $left={p - x} $side="in" $dim />)}
    {ins.map(p => <Port key={`i${p}`} $left={p - x} $side="in" />)}
    {dimOuts.map(p => <Port key={`e${p}`} $left={p - x} $side="out" $dim />)}
    {outs.map(p => <Port key={`o${p}`} $left={p - x} $side="out" />)}
  </NodeBox>
);

const OutputPanel = ({ x, y, clip, levels }: { x: number; y: number; clip?: boolean; levels?: boolean }) => (
  <OutPanel $x={x} $y={y}>
    <WidgetBar $flush>
      {range(6.3, 29.2, 8).map(p => <OpenPort key={p} $left={p} />)}
    </WidgetBar>
    <OutBody>
      <OutNumbers>
        {range(1, 1, 8).map(n => <span key={n}>{n}</span>)}
      </OutNumbers>
      {levels && <LevelTick $left={1} />}
      {levels && <LevelTick $left={30} />}
      <OutControls>
        <FaVolumeUp size={17} />
        <VolumeDial />
        <Phones><FaHeadphones size={17} /></Phones>
      </OutControls>
    </OutBody>
    <SmallLabel $clip={clip}>m.interface.out~</SmallLabel>
  </OutPanel>
);

const LabeledField = ({ label, value, unit }: { label: string; value: string; unit?: string }) => (
  <FieldGroup>
    <FieldLabel>{label}</FieldLabel>
    <FieldLine>
      <NumberField>{value}</NumberField>
      {unit && <FieldUnit>{unit}</FieldUnit>}
    </FieldLine>
  </FieldGroup>
);

const App = () => (
  <Shell>
    <GlobalStyle />
    <TitleBar>
      <AppIcon>M<b>X</b></AppIcon>
      m|klang e :: mPatcher: Demo_mPatcher.mpatcher / mProject: Demo_mPatcher.mklangproject*
      <Minimize />
    </TitleBar>
    <MenuBar>
      {menuItems.map(m => <span key={m}>{m}</span>)}
    </MenuBar>
    <Toolbar>
      <Box size={17}><rect x="1.5" y="2" width="15" height="14" stroke="#d0d0d0" /><path d="M6 2V16" stroke="#d0d0d0" /><path d="M3.5 5V14" stroke="#d0d0d0" strokeDasharray="1.5 1.5" /></Box>
      <ZoomLabel>82% ▾</ZoomLabel>
      <ToolSlot $gap={0}><Box><rect x="2" y="2" width="14" height="14" /><path d="M2 5H16M2 13H16" /></Box></ToolSlot>
      <ToolSlot $gap={10}><Box><path d="M15 2H3V16H15" /><path d="M7 11L8 7H12L11 11" /></Box></ToolSlot>
      <ToolSlot $gap={8}><Box><path d="M2 3H16V13H12V16L9 13H2Z" fill="currentColor" /></Box></ToolSlot>
      <ToolSlot><Box><rect x="2" y="2" width="14" height="14" /><path d="M6 5L12 13M12 5L6 13" /></Box></ToolSlot>
      <ToolSlot $caret><Box><rect x="2" y="2" width="14" height="14" /><circle cx="9" cy="9" r="3.5" /></Box></ToolSlot>
      <ToolSlot $caret><Box><rect x="2" y="2" width="14" height="14" /><path d="M7 6L12 9L7 12Z" fill="currentColor" /></Box></ToolSlot>
      <ToolSlot $caret><Box><rect x="2" y="2" width="14" height="14" /><path d="M2 9H16" /></Box></ToolSlot>
      <ToolSlot $caret><Box w={1.8}><path d="M5 16A7.5 7.5 0 1 1 13 16M9 9L11 4" /></Box></ToolSlot>
      <ToolSlot $caret><Box w={3}><path d="M9 3V15M3 9H15" /></Box></ToolSlot>
      <ToolSlot $gap={26}><PaintBucket size={18} fill="currentColor" /></ToolSlot>
    </Toolbar>
    <Main>
      <SideBar>
        <SideIcon $mt={0}><SideLogo>m</SideLogo></SideIcon>
        <SideIcon $dim $mt={47}><Box><rect x="2" y="4" width="14" height="11" /><path d="M2 8H16M4 15V17M14 15V17" /></Box></SideIcon>
        <SideIcon><Box w={1.6}><path d="M2 8V10M5 6V12M8 3V15M10.5 5V13M13 7V11M16 8V10" /></Box></SideIcon>
        <SideIcon><Box w={2.4}><path d="M2.5 2V16M15.5 2V16" strokeDasharray="2 2" /><path d="M6 5L13 9L6 13Z" fill="currentColor" stroke="none" /></Box></SideIcon>
        <SideIcon><Box w={1.5}><rect x="1.5" y="2" width="15" height="15" /><circle cx="5" cy="5.5" r="1.2" fill="currentColor" stroke="none" /><path d="M3 15L9 8L15 15Z" fill="currentColor" stroke="none" /></Box></SideIcon>
        <SideIcon $dim><FaPaperclip size={16} /></SideIcon>
        <SideIcon><Rotated $deg={-90}><FaPlug size={17} /></Rotated></SideIcon>
        <SideIcon $dim $mt={8}><Box w={1.5}><rect x="1.5" y="1.5" width="15" height="15" rx="3" /><rect x="5" y="5" width="8" height="8" rx="1" /></Box></SideIcon>
        <SideIcon $dim $mt={4}>m|</SideIcon>
        <SideIcon $dim $mt={28}><FaStar size={15} /></SideIcon>
      </SideBar>
      <MainColumn>
        <Workspace>
          <CableLayer width="1795" height="890" viewBox={`${OX} ${OY} 1795 890`} fill="none">
            {controlCables.map(d => <path key={d} d={d} stroke="#a2a2a2" strokeWidth="2" />)}
            {audioCables.map(d => <path key={d} d={d} stroke="#d6e684" strokeWidth="3" />)}
            {audioCables.map(d => <path key={`k${d}`} d={d} stroke="#3c4636" strokeWidth="1" strokeDasharray="3 3" />)}
          </CableLayer>

          <PatchBar>
            <PatchGroup $w={178}>
              <PatchLogo>m</PatchLogo>
              <PatchButton $w={37}><FaFolderOpen size={13} /></PatchButton>
              <PatchButton $w={37}><FaCog size={13} /></PatchButton>
              <PatchButton $w={37}><FaCar size={14} /></PatchButton>
              <PatchButton $w={37}><Move size={14} /></PatchButton>
            </PatchGroup>
            <PatchGroup $w={306}>
              <PatchButton $w={32} $color="#7dc242"><FaSave size={14} /></PatchButton>
              <PatchButton $w={20}>
                <Box size={14} w={1.6}><path d="M2 15V2H15V9" strokeDasharray="2 2" /><circle cx="13" cy="13" r="4" /><path d="M13 11V15M11 13H15" /></Box>
              </PatchButton>
              <PresetSelect>1 linear rampup 30 (this File Default)<Caret /></PresetSelect>
              <PatchButton $w={26} $ml={4}><FaCaretLeft size={13} /></PatchButton>
              <PatchButton $w={12}><FaCaretRight size={13} /></PatchButton>
            </PatchGroup>
            <PatchGroup $w={107}>
              <PatchButton $w={37}><FaHammer size={13} /></PatchButton>
              <PatchButton $w={37}><RefreshCw size={13} strokeWidth={2.6} /></PatchButton>
              <PatchButton $w={37} $color="#cfcfcf"><Rotated $deg={45}><FaPlug size={13} /></Rotated></PatchButton>
            </PatchGroup>
          </PatchBar>

          {selects.map(s => (
            <Widget key={`${s.x}-${s.y}`} $x={s.x} $y={s.y} $w={174}>
              <WidgetHead $pad={14}>m.controldata.select<FaSnowflake size={12} /></WidgetHead>
              <WidgetRow>
                <WidgetField>{s.option}<Caret $size={3.5} /></WidgetField>
                <TypeFlag $on={s.flo}>flo</TypeFlag>
                <TypeFlag $on={!s.flo}>int</TypeFlag>
              </WidgetRow>
              <WidgetBar><OpenPort $left={s.port} /></WidgetBar>
            </Widget>
          ))}

          {constants.map(c => (
            <Widget key={c.x} $x={c.x} $y={c.y} $w={112}>
              <WidgetHead $pad={4} $frost>m.constant<FaSnowflake size={12} /></WidgetHead>
              <WidgetRow>
                <WidgetField $input>{c.value}</WidgetField>
                <TypeFlag>flo</TypeFlag>
                <TypeFlag $on>int</TypeFlag>
              </WidgetRow>
              <WidgetBar><OpenPort $left={8} /></WidgetBar>
            </Widget>
          ))}

          {nodes.map(n => <PatchNode key={`${n.t}-${n.x}-${n.y}`} {...n} />)}

          <SubPatch $x={67} $y={499} $w={50}>
            p Ableton
            <Port $left={7} $side="in" />
            <Port $left={16} $side="in" />
            <Port $left={7} $side="out" />
          </SubPatch>

          <PatchNote $x={156} $y={323}>Ramp Up sound</PatchNote>
          <PatchNote $x={127} $y={507}>This is an Ableton distortion object</PatchNote>
          <PatchNote $x={445} $y={316}>Ignition sound</PatchNote>
          <PatchNote $x={720} $y={383}>Idle sound</PatchNote>

          <InterfaceSelect>
            <SmallLabel>m.interface.select~</SmallLabel>
            <OutRow>
              <OutCell>Off<b>1</b></OutCell>
              <OutCell>Off<b>2</b></OutCell>
            </OutRow>
            <OutStrip $h={10} />
            <OutRow>
              <OutCell>Off<b>3</b></OutCell>
              <OutCell>Off<b>4</b></OutCell>
            </OutRow>
            <OutStrip $h={11} />
            <WidgetBar $flush>
              {range(8, 64, 4).map(p => <OpenPort key={p} $left={p} />)}
            </WidgetBar>
          </InterfaceSelect>

          <OutputPanel x={67} y={899} clip levels />
          <OutputPanel x={507} y={730} />

          <ScrollThumb />

          <Window $x={990} $y={79} $w={579}>
            <WindowHead>
              <WindowLogo>m</WindowLogo>
              processEq[0]
              <HeadTools><Shrink /><CloseX /></HeadTools>
            </WindowHead>
            <EqBody>
              <EqLeft>
                <EqPlot />
                <BandRow>
                  {bands.map((b, i) => (
                    <Band key={i}>
                      <BandSelect $color={b.color}>{b.name}<Caret $color={BLUE} $size={4.5} /></BandSelect>
                      <BandBox>
                        {b.knobs.map((k, j) => (
                          <KnobCell key={j}>
                            <Knob angle={k.angle} color={k.color} hand={k.hand} />
                            <ValueRow>
                              <ValueField>{k.value}</ValueField>
                              {k.unit && <ValueUnit>{k.unit}</ValueUnit>}
                            </ValueRow>
                          </KnobCell>
                        ))}
                      </BandBox>
                    </Band>
                  ))}
                </BandRow>
              </EqLeft>
              <EqRight>
                <Meter w={66} h={160} x={12} top={16} bottom={154} peak={90} bar={111} mid={119} title="OUT" labelX={56} ticks={eqTicks} tickX={27} />
                <KnobHeading $mt={20}>Gain</KnobHeading>
                <BigKnobBox>
                  <Knob big angle={0} />
                  <BigValue>0<span>dB</span></BigValue>
                </BigKnobBox>
                <KnobHeading $mt={19}>Delay</KnobHeading>
                <BigKnobBox>
                  <Knob big angle={-135} />
                  <BigValue>0<span>ms</span></BigValue>
                </BigKnobBox>
              </EqRight>
            </EqBody>
            <WindowFoot>m.process.eq~</WindowFoot>
          </Window>

          <Window $x={989} $y={560} $w={500}>
            <WindowHead>
              <WindowLogo>m</WindowLogo>
              sourceLooper[0]
              <HeadTools><Shrink /><CloseX /></HeadTools>
            </WindowHead>
            <LooperBody>
              <LooperLeft>
                <LooperTop>
                  <ImportButton>Import File</ImportButton>
                  <div>
                    <FieldLabel>Audio File</FieldLabel>
                    <FileSelect>Linear_Ramp_up_30_torq...<Caret $color={BLUE} $size={4.5} /></FileSelect>
                  </div>
                </LooperTop>
                <FieldRow $mt={21}>
                  <LabeledField label="Start" value="7.821" unit="s" />
                  <LabeledField label="End" value="7.9" unit="s" />
                </FieldRow>
                <Waveform />
                <WaveInfo>File Length: 15.98 s | Selection Length: 79.04 ms</WaveInfo>
                <FieldRow $mt={22}>
                  <LabeledField label="Fade-In" value="458" unit="ms" />
                  <LabeledField label="Fade-Out" value="474" unit="ms" />
                  <LabeledField label="Crossfade" value="5.008" unit="s" />
                  <LabeledField label="Pitch Factor" value="1" />
                </FieldRow>
              </LooperLeft>
              <LooperRight>
                <OutTitle>Out</OutTitle>
                <Meter w={60} h={284} x={0.5} top={0} bottom={279} peak={185} bar={195} mid={217} labelX={43} ticks={looperTicks} tickX={14} />
              </LooperRight>
            </LooperBody>
            <WindowFoot>m.source.looper~</WindowFoot>
          </Window>
        </Workspace>
        <StatusBar>
          <span>^</span>
          <span><b>panel:</b> Colored background area</span>
        </StatusBar>
      </MainColumn>
    </Main>
    <BottomBar>
      <BottomIcon $mx={7}><FaLock size={15} /></BottomIcon>
      <BottomIcon $mx={11} $dim><Box><path d="M2 14V2H16V8M2 14H8" /><path d="M8 7L16 11L12 12L11 16Z" fill="currentColor" /></Box></BottomIcon>
      <BottomIcon $mx={44}><Box w={1.8}><rect x="1" y="2" width="16" height="9" fill="currentColor" /><path d="M9 12L3 17M9 12L15 17" /></Box></BottomIcon>
      <BottomIcon $mx={25}><Box w={1.4}><rect x="1" y="3" width="11" height="8" /><rect x="5" y="7" width="12" height="9" fill="currentColor" /></Box></BottomIcon>
      <BottomIcon $mx={26} $dim><Box w={1.2}><path d="M2 4H16V13H2Z" fill="currentColor" /><path d="M5 1L12 17" stroke="#2f2f2f" strokeWidth="1.6" /></Box></BottomIcon>
      <BottomIcon $mx={9} $dim><Box w={1}><path d="M5 1V17M9 1V17M13 1V17M1 5H17M1 9H17M1 13H17" /></Box></BottomIcon>
      <BottomIcon $mx={43} $dim $plus><FaPaperclip size={15} /></BottomIcon>
      <BottomIcon $mx={25}><FaWrench size={15} /></BottomIcon>
      <BottomIcon $mx={23}><PianoKeys /></BottomIcon>
      <BottomIcon $mx={27}><KeyboardGrid /></BottomIcon>
    </BottomBar>
  </Shell>
);

export default App;
